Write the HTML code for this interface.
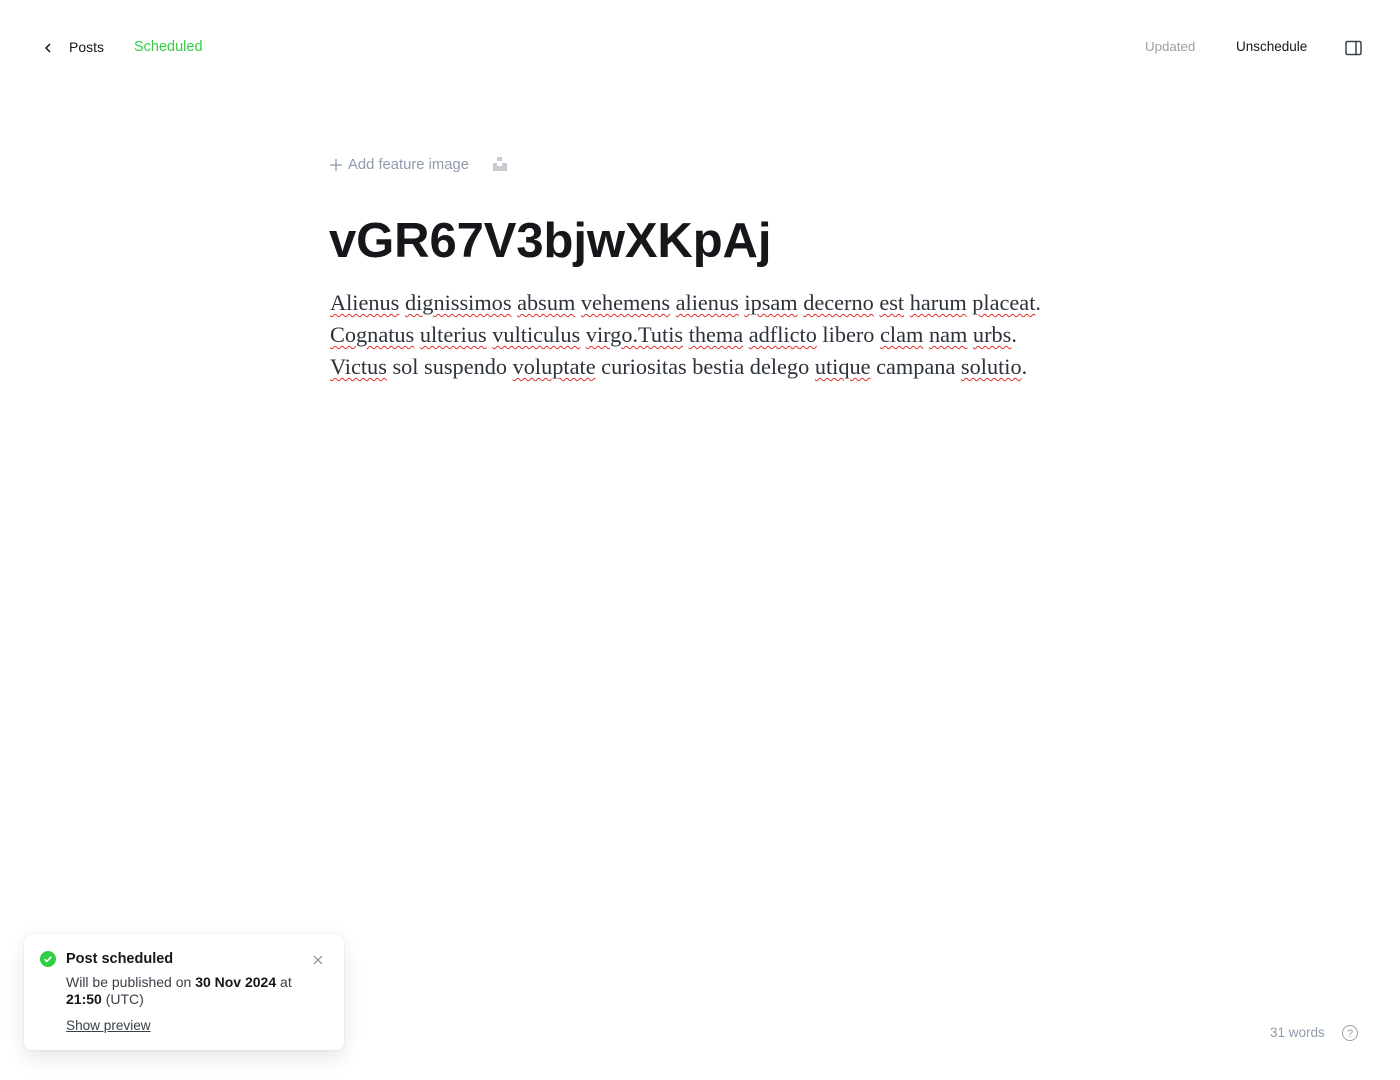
<!DOCTYPE html>
<html><head><meta charset="utf-8"><style>
*{margin:0;padding:0;box-sizing:border-box}
body{width:1400px;height:1080px;background:#fff;font-family:"Liberation Sans",sans-serif;position:relative;overflow:hidden;color:#15171a}
.a{position:absolute;white-space:nowrap}
.sp{text-decoration:underline wavy #e0322b;text-decoration-thickness:1px;text-underline-offset:3px}
</style></head><body>
<svg class="a" style="left:43px;top:42px" width="10" height="12" viewBox="0 0 10 12"><path d="M7 2L3 6l4 4" fill="none" stroke="#15171a" stroke-width="1.5"/></svg>
<div class="a" style="left:69px;top:39px;font-size:14px;color:#15171a">Posts</div>
<div class="a" style="left:134px;top:39px;font-size:14.5px;color:#30cf43">Scheduled</div>
<div class="a" style="left:1145px;top:39px;font-size:13.3px;color:#9ba0a5">Updated</div>
<div class="a" style="left:1236px;top:39px;font-size:13.5px;color:#15171a">Unschedule</div>
<svg class="a" style="left:1345px;top:40px" width="18" height="16" viewBox="0 0 18 16"><rect x="1" y="1.5" width="15" height="13" rx="1.5" fill="none" stroke="#394047" stroke-width="1.5"/><line x1="11" y1="1.5" x2="11" y2="14.5" stroke="#394047" stroke-width="1.5"/></svg>
<svg class="a" style="left:330px;top:159px" width="12" height="12" viewBox="0 0 12 12"><path d="M6 0v12M0 6h12" stroke="#8e9cac" stroke-width="1.3"/></svg>
<div class="a" style="left:348px;top:157px;font-size:14.8px;color:#8e9cac">Add feature image</div>
<svg class="a" style="left:492px;top:157px" width="16" height="15" viewBox="0 0 16 15"><rect x="5" y="0" width="5" height="4" fill="#c8ccd0"/><rect x="1" y="6" width="14" height="8" fill="#c8ccd0"/><rect x="5" y="6" width="5" height="3" fill="#fff"/></svg>
<div class="a" style="left:329px;top:213px;font-size:49px;font-weight:bold;letter-spacing:-0.1px;color:#15171a">vGR67V3bjwXKpAj</div>
<div class="a" style="left:330px;top:287px;font-family:'Liberation Serif',serif;font-size:22.3px;line-height:32px;color:#2b323a">
<span class="sp">Alienus</span> <span class="sp">dignissimos</span> <span class="sp">absum</span> <span class="sp">vehemens</span> <span class="sp">alienus</span> <span class="sp">ipsam</span> <span class="sp">decerno</span> <span class="sp">est</span> <span class="sp">harum</span> <span class="sp">placeat</span>.<br>
<span class="sp">Cognatus</span> <span class="sp">ulterius</span> <span class="sp">vulticulus</span> <span class="sp">virgo.Tutis</span> <span class="sp">thema</span> <span class="sp">adflicto</span> libero <span class="sp">clam</span> <span class="sp">nam</span> <span class="sp">urbs</span>.<br>
<span class="sp">Victus</span> sol suspendo <span class="sp">voluptate</span> curiositas bestia delego <span class="sp">utique</span> campana <span class="sp">solutio</span>.</div>
<div class="a" style="left:24px;top:934px;width:320px;height:116px;border-radius:8px;background:#fff;box-shadow:0 0 1px rgba(0,0,0,.2),0 8px 20px rgba(0,0,0,.1)"></div>
<svg class="a" style="left:40px;top:951px" width="16" height="16" viewBox="0 0 16 16"><circle cx="8" cy="8" r="8" fill="#30cf43"/><path d="M4.5 8.2l2.3 2.2 4.5-4.6" fill="none" stroke="#fff" stroke-width="1.6"/></svg>
<div class="a" style="left:66px;top:951px;font-size:14.5px;font-weight:bold">Post scheduled</div>
<svg class="a" style="left:313px;top:955px" width="10" height="10" viewBox="0 0 10 10"><path d="M1 1l8 8M9 1l-8 8" stroke="#7c8b9a" stroke-width="1.2"/></svg>
<div class="a" style="left:66px;top:974px;font-size:14px;line-height:17px;color:#394047">Will be published on <b style="color:#15171a">30 Nov 2024</b> at<br><b style="color:#15171a">21:50</b> (UTC)</div>
<div class="a" style="left:66px;top:1018px;font-size:13.6px;color:#394047;text-decoration:underline">Show preview</div>
<div class="a" style="left:1270px;top:1025px;font-size:13.5px;color:#8e9cac">31 words</div>
<svg class="a" style="left:1341px;top:1024px" width="18" height="18" viewBox="0 0 18 18"><circle cx="9" cy="9" r="7.5" fill="none" stroke="#9ba0a5" stroke-width="1"/><text x="9" y="13" font-size="11" text-anchor="middle" fill="#9ba0a5" font-family="Liberation Sans">?</text></svg>
</body></html>
